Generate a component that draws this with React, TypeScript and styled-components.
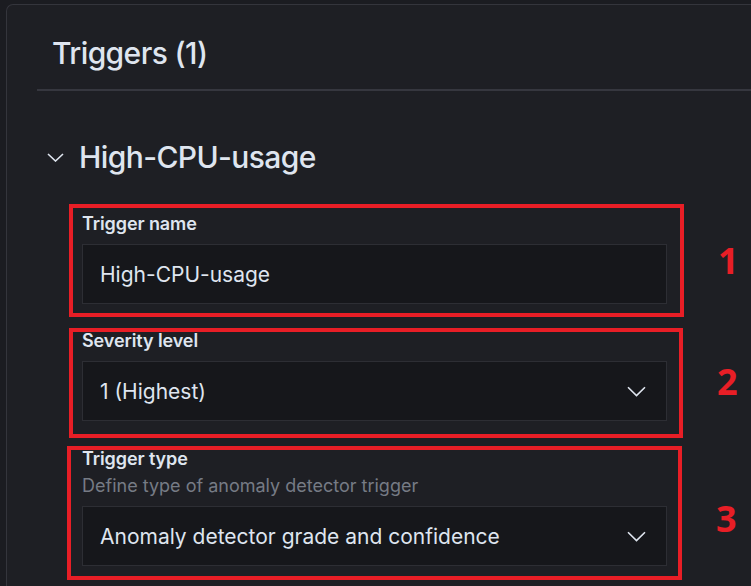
import React from "react";
import styled, { createGlobalStyle } from "styled-components";

const COLORS = {
  PAGE: "#1b1c21",
  PANEL: "#1e1f24",
  PANEL_BORDER: "#34353c",
  DIVIDER: "#36373f",
  TEXT: "#dfe5ef",
  SUBDUED: "#767b85",
  INPUT: "#16171b",
  INPUT_BORDER: "#2d2e34",
  MARK: "#e81e26",
};

const GlobalStyle = createGlobalStyle`
  html, body {
    margin: 0;
    padding: 0;
    background: ${COLORS.PAGE};
    overflow: hidden;
  }
  body {
    font-family: Inter, "Noto Sans", sans-serif;
    color: ${COLORS.TEXT};
  }
`;

const Panel = styled.section`
  margin: 4px 0 0 6px;
  width: 745px;
  height: 582px;
  overflow: hidden;
  background: ${COLORS.PANEL};
  border: 1px solid ${COLORS.PANEL_BORDER};
  border-right: none;
  border-bottom: none;
  border-radius: 7px 0 0 0;
  box-sizing: border-box;
`;

const PanelHeader = styled.header`
  margin-left: 30px;
  padding: 30px 0 18px 15px;
  border-bottom: 2px solid ${COLORS.DIVIDER};
`;

const Title = styled.h2`
  margin: 0;
  font-size: 30px;
  line-height: 36px;
  font-weight: 500;
  letter-spacing: -0.6px;
`;

const Body = styled.div`
  padding: 48px 0 0 40px;
`;

const AccordionButton = styled.div`
  display: flex;
  align-items: center;
  gap: 15px;
  margin-bottom: 29px;
  svg {
    width: 17px;
    height: 9px;
    flex: none;
  }
`;

const AccordionTitle = styled.h3`
  margin: 0;
  font-size: 30px;
  line-height: 36px;
  font-weight: 500;
  letter-spacing: -0.6px;
`;

const Fields = styled.div`
  display: flex;
  flex-direction: column;
  padding-left: 22px;
`;

const AnnotRow = styled.div<{ $gap: number }>`
  display: flex;
  align-items: center;
  margin-bottom: ${(p) => p.$gap}px;
`;

const RedBox = styled.div<{ $pad: string; $shift: number; $width: number }>`
  box-sizing: border-box;
  width: ${(p) => p.$width}px;
  margin-left: ${(p) => p.$shift}px;
  border: 4px solid ${COLORS.MARK};
  padding: ${(p) => p.$pad};
`;

const Number = styled.span<{ $drop: number }>`
  margin-left: 34px;
  margin-top: ${(p) => p.$drop}px;
  font-family: "Open Sans", "DejaVu Sans", sans-serif;
  font-weight: 700;
  font-size: 36px;
  line-height: 40px;
  color: ${COLORS.MARK};
`;

const FieldWrap = styled.div`
  width: 585px;
  display: flex;
  flex-direction: column;
`;

const Label = styled.label`
  font-size: 18px;
  line-height: 18px;
  font-weight: 600;
  letter-spacing: -0.1px;
  margin-bottom: 11px;
`;

const Help = styled.div`
  font-size: 18px;
  line-height: 18px;
  color: ${COLORS.SUBDUED};
  margin: -2px 0 11px;
`;

const Control = styled.div`
  box-sizing: border-box;
  height: 60px;
  display: flex;
  align-items: center;
  justify-content: space-between;
  padding: 0 20px 0 17px;
  background: ${COLORS.INPUT};
  border: 1px solid ${COLORS.INPUT_BORDER};
  font-size: 21px;
  color: ${COLORS.TEXT};
  svg {
    width: 19px;
    height: 11px;
    flex: none;
  }
`;

const Chevron = () => (
  <svg viewBox="0 0 19 11" fill="none">
    <path d="M1 1.2L9.5 9.6L18 1.2" stroke={COLORS.TEXT} strokeWidth="1.6" />
  </svg>
);

interface FieldProps {
  label: string;
  help?: string;
  value: string;
  select?: boolean;
}

function Field({ label, help, value, select }: FieldProps) {
  return (
    <FieldWrap>
      <Label>{label}</Label>
      {help && <Help>{help}</Help>}
      <Control>
        <span>{value}</span>
        {select && <Chevron />}
      </Control>
    </FieldWrap>
  );
}

export default function App() {
  return (
    <>
      <GlobalStyle />
      <Panel>
        <PanelHeader>
          <Title>Triggers (1)</Title>
        </PanelHeader>
        <Body>
          <AccordionButton>
            <svg viewBox="0 0 17 9" fill="none">
              <path d="M1 1L8.5 8L16 1" stroke={COLORS.TEXT} strokeWidth="1.6" />
            </svg>
            <AccordionTitle>High-CPU-usage</AccordionTitle>
          </AccordionButton>
          <Fields>
            <AnnotRow $gap={11}>
              <RedBox $pad="7px 0 9px 9px" $shift={0} $width={615}>
                <Field label="Trigger name" value="High-CPU-usage" />
              </RedBox>
              <Number $drop={0}>1</Number>
            </AnnotRow>
            <AnnotRow $gap={8}>
              <RedBox $pad="0 0 13px 9px" $shift={0} $width={614}>
                <Field label="Severity level" value="1 (Highest)" select />
              </RedBox>
              <Number $drop={-2}>2</Number>
            </AnnotRow>
            <AnnotRow $gap={0}>
              <RedBox $pad="0 0 10px 11px" $shift={-2} $width={615}>
                <Field
                  label="Trigger type"
                  help="Define type of anomaly detector trigger"
                  value="Anomaly detector grade and confidence"
                  select
                />
              </RedBox>
              <Number $drop={12}>3</Number>
            </AnnotRow>
          </Fields>
        </Body>
      </Panel>
    </>
  );
}
